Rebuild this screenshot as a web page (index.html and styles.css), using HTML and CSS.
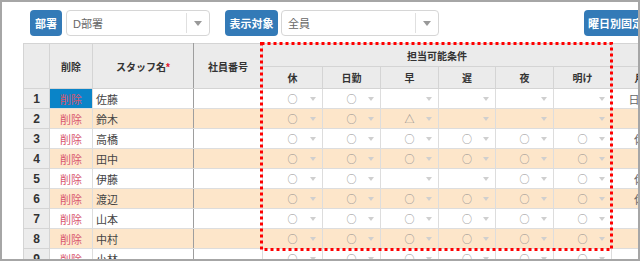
FILE: index.html
```html
<!DOCTYPE html>
<html lang="ja">
<head>
    <meta charset="UTF-8">
    <title>スタッフ担当可能条件</title>
    <link rel="stylesheet" href="styles.css">
</head>
<body>
    <div class="frame">
        <div class="toolbar">
            <button class="btn btn-dept">部署</button>
            <div class="select">
                <span class="select-value">D部署</span>
                <span class="select-arrow"></span>
            </div>
            <button class="btn btn-target">表示対象</button>
            <div class="select select-wide">
                <span class="select-value">全員</span>
                <span class="select-arrow"></span>
            </div>
            <button class="btn btn-fixed">曜日別固定</button>
        </div>

        <div class="grid-wrap">
            <table class="grid">
                <colgroup>
                    <col style="width: 26px">
                    <col style="width: 43px">
                    <col style="width: 101px">
                    <col style="width: 69px">
                    <col style="width: 60px">
                    <col style="width: 58px">
                    <col style="width: 58px">
                    <col style="width: 57px">
                    <col style="width: 58px">
                    <col style="width: 58px">
                    <col style="width: 56px">
                </colgroup>
                <thead>
                    <tr class="head-top">
                        <th rowspan="2"></th>
                        <th rowspan="2">削除</th>
                        <th rowspan="2" class="staff-col">スタッフ名<span class="req">*</span></th>
                        <th rowspan="2">社員番号</th>
                        <th colspan="6">担当可能条件</th>
                        <th></th>
                    </tr>
                    <tr class="head-sub">
                        <th>休</th>
                        <th>日勤</th>
                        <th>早</th>
                        <th>遅</th>
                        <th>夜</th>
                        <th>明け</th>
                        <th>月</th>
                    </tr>
                </thead>
                <tbody id="rows"></tbody>
            </table>

            <svg class="highlight" width="354" height="210">
                <rect x="1.5" y="1.5" width="350" height="206" fill="none" stroke="#ff0000" stroke-width="3" stroke-dasharray="3 3"></rect>
            </svg>
        </div>
    </div>

    <script>
        const staff = [
            ['佐藤', ['○', '○', '', '', '', ''], '日勤'],
            ['鈴木', ['○', '○', '△', '', '', ''], ''],
            ['高橋', ['○', '○', '○', '○', '○', '○'], '休'],
            ['田中', ['○', '○', '○', '○', '○', '○'], ''],
            ['伊藤', ['○', '○', '', '', '○', '○'], '休'],
            ['渡辺', ['○', '○', '○', '○', '○', '○'], '休'],
            ['山本', ['○', '○', '○', '○', '○', '○'], ''],
            ['中村', ['○', '○', '○', '○', '○', '○'], ''],
            ['小林', ['○', '○', '○', '○', '○', '○'], '']
        ];

        const tbody = document.getElementById('rows');

        staff.forEach(function(row, i) {
            const tr = document.createElement('tr');
            if (i % 2 === 1) tr.className = 'even';

            let html = `<td class="num">${i + 1}</td>`;
            html += `<td class="del${i === 0 ? ' selected' : ''}">削除</td>`;
            html += `<td class="name staff-col">${row[0]}</td>`;
            html += `<td></td>`;
            row[1].forEach(function(mark) {
                html += `<td class="opt">${mark}</td>`;
            });
            html += `<td class="month">${row[2]}</td>`;

            tr.innerHTML = html;
            tbody.appendChild(tr);
        });
    </script>
</body>
</html>
```

FILE: styles.css
```css
* {
    box-sizing: border-box;
}

body {
    margin: 0;
    font-family: 'Liberation Sans', 'Noto Sans CJK JP', sans-serif;
    background: #fff;
}

.frame {
    width: 640px;
    height: 261px;
    border: 2px solid #a6a6a6;
    overflow: hidden;
    background: #fff;
}

.toolbar {
    display: flex;
    align-items: center;
    height: 34px;
    padding: 8px 0 0 28px;
}

.btn {
    flex-shrink: 0;
    height: 26px;
    padding: 0;
    border: none;
    border-radius: 4px;
    background: #337ab7;
    color: #fff;
    font-family: 'Liberation Sans', 'Noto Sans CJK JP', sans-serif;
    font-size: 11px;
    font-weight: bold;
}

.btn-dept {
    width: 32px;
}

.btn-target {
    width: 53px;
    margin-left: 15px;
}

.btn-fixed {
    width: 70px;
    margin-left: 145px;
    padding-left: 4px;
    text-align: left;
}

.select {
    flex-shrink: 0;
    display: flex;
    align-items: center;
    width: 144px;
    height: 26px;
    margin-left: 4px;
    border: 1px solid #d6d6d6;
    border-radius: 4px;
    background: #fff;
}

.select-wide {
    width: 158px;
    margin-left: 3px;
}

.select-value {
    flex: 1;
    padding-left: 6px;
    font-size: 11px;
    color: #666;
}

.select-arrow {
    display: flex;
    align-items: center;
    justify-content: center;
    width: 23px;
    height: 20px;
    border-left: 1px solid #e0e0e0;
}

.select-arrow::before {
    content: '';
    border-left: 4px solid transparent;
    border-right: 4px solid transparent;
    border-top: 5px solid #999;
}

.grid-wrap {
    position: relative;
    margin: 7px 0 0 21px;
}

.grid {
    border-collapse: collapse;
    table-layout: fixed;
    width: 644px;
}

.grid th {
    background: #ebebeb;
    border: 1px solid #d4d4d4;
    color: #333;
    font-size: 10px;
    font-weight: bold;
    padding: 0;
}

.head-top {
    height: 23px;
}

.head-sub {
    height: 22px;
}

.req {
    color: #e0102a;
}

.grid td {
    height: 20px;
    padding: 0;
    border: 1px solid #dddddd;
    font-size: 11px;
    color: #444;
    white-space: nowrap;
    overflow: hidden;
}

.grid tr.even td {
    background: #fde6ca;
}

.grid td.num {
    background: #ececec;
    border-color: #d4d4d4;
    color: #333;
    font-weight: bold;
    font-size: 12px;
    text-align: center;
}

.grid tr.even td.num {
    background: #ececec;
}

.grid td.del {
    color: #d8566d;
    text-align: center;
}

.grid td.del.selected {
    background: #0a84c8;
}

.grid td.name {
    padding-left: 3px;
}

.grid .staff-col {
    border-right: 1px solid #9e9e9e;
}

.grid td.opt {
    position: relative;
    text-align: center;
    color: #8a8a8a;
    font-family: 'Noto Sans CJK JP', sans-serif;
    font-size: 10px;
}

.grid td.opt::after {
    content: '';
    position: absolute;
    right: 6px;
    top: 8px;
    border-left: 3px solid transparent;
    border-right: 3px solid transparent;
    border-top: 4px solid #cfcfcf;
}

.grid td.month {
    text-align: center;
    color: #666;
}

.highlight {
    position: absolute;
    left: 237px;
    top: -1px;
    overflow: visible;
}
```
